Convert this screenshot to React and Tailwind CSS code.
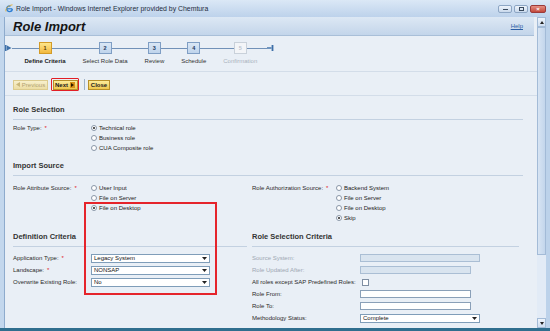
import React from 'react';

const STEPS = [
  { n: 1, label: 'Define Criteria', state: 'active' },
  { n: 2, label: 'Select Role Data', state: 'normal' },
  { n: 3, label: 'Review', state: 'normal' },
  { n: 4, label: 'Schedule', state: 'normal' },
  { n: 5, label: 'Confirmation', state: 'disabled' },
];

const boxStyles = {
  active: 'border-[#d39b27] bg-gradient-to-b from-[#fde68a] to-[#f2b83c] text-[#5b3b00]',
  normal: 'border-[#7f9ec4] bg-gradient-to-b from-[#dae7f5] to-[#bfd4ec] text-[#1e3a5e]',
  disabled: 'border-[#c9d1da] bg-[#f3f5f8] text-[#bcc4ce]',
};

const labelStyles = {
  active: 'font-bold text-[#222]',
  normal: 'text-[#333]',
  disabled: 'text-[#a9b2bd]',
};

function Step({ n, label, state }) {
  return (
    <div className="flex flex-col items-stretch">
      <div className="flex h-[12px] items-center">
        <div className="h-px flex-1 bg-[#7191b8]" />
        <div className={`flex h-[12px] w-[13px] items-center justify-center border text-[5.5px] font-bold ${boxStyles[state]}`}>
          {n}
        </div>
        <div className="h-px flex-1 bg-[#7191b8]" />
      </div>
      <span className={`mt-[3px] px-[8.5px] text-center text-[6px] leading-[8px] whitespace-nowrap ${labelStyles[state]}`}>
        {label}
      </span>
    </div>
  );
}

function Radio({ label, checked }) {
  return (
    <div className="flex h-[10px] items-center gap-[2px]">
      <span className="flex h-[6px] w-[6px] items-center justify-center rounded-full border border-[#8a97a8] bg-white">
        {checked && <span className="h-[2px] w-[2px] rounded-full bg-[#222]" />}
      </span>
      <span className="text-[6px] leading-[8px] text-[#222]">{label}</span>
    </div>
  );
}

function Label({ text, required, muted, width }) {
  return (
    <span className={`shrink-0 text-[6px] leading-[10px] ${muted ? 'text-[#9ea8b4]' : 'text-[#2a2a2a]'} ${width}`}>
      {text}
      {required && <span className="ml-[3px] text-[#e0201c]">*</span>}
    </span>
  );
}

function Select({ value, width }) {
  return (
    <div className={`flex h-[9px] items-center justify-between border border-[#7f9db9] bg-white px-[2px] ${width}`}>
      <span className="text-[6px] leading-[7px] text-[#111]">{value}</span>
      <svg width="5" height="3" viewBox="0 0 5 3">
        <path d="M0 0h5L2.5 3z" fill="#222" />
      </svg>
    </div>
  );
}

function Heading({ children, className = '' }) {
  return (
    <div className={`border-b border-[#c3d1e1] pb-[5px] text-[7.5px] font-bold leading-[9px] text-[#333] ${className}`}>
      {children}
    </div>
  );
}

function FieldRow({ children }) {
  return <div className="flex h-[12px] items-center">{children}</div>;
}

export default function App() {
  return (
    <div className="relative flex h-[331px] w-[550px] flex-col overflow-hidden bg-[#bcd2ea] font-['Liberation_Sans',Arial,sans-serif]">
      {/* Title bar */}
      <div className="flex h-[17px] items-center bg-gradient-to-b from-[#dbe8f6] to-[#bdd2eb] pl-[5px] pr-[4px]">
        <svg width="9" height="9" viewBox="0 0 9 9">
          <circle cx="4.5" cy="4.8" r="2.8" fill="none" stroke="#2d7fd4" strokeWidth="1.4" strokeDasharray="14 4" />
          <path d="M2 4.8h5" stroke="#2d7fd4" strokeWidth="1.2" />
          <path d="M1 7.5C0 5 3 1.5 7.5 0.8" fill="none" stroke="#e8b030" strokeWidth="0.9" />
        </svg>
        <span className="ml-[2px] text-[6.9px] leading-[9px] text-[#1f2d3d]">
          Role Import - Windows Internet Explorer provided by Chemtura
        </span>
        <div className="ml-auto flex items-center gap-[2px]">
          <div className="flex h-[8px] w-[14px] items-center justify-center rounded-[2px] border border-[#8da6c4] bg-gradient-to-b from-[#eef4fb] to-[#c9d9ec]">
            <div className="mt-[2px] h-[1px] w-[5px] bg-[#3a4a5e]" />
          </div>
          <div className="flex h-[8px] w-[14px] items-center justify-center rounded-[2px] border border-[#8da6c4] bg-gradient-to-b from-[#eef4fb] to-[#c9d9ec]">
            <div className="h-[4px] w-[5px] border border-[#3a4a5e]" />
          </div>
          <div className="flex h-[8px] w-[16px] items-center justify-center rounded-[2px] border border-[#9a3a3a] bg-gradient-to-b from-[#e58f84] to-[#c2463a]">
            <span className="text-[6px] font-bold leading-[6px] text-white">×</span>
          </div>
        </div>
      </div>

      {/* Window body */}
      <div className="flex flex-1">
        <div className="w-[5px] border-r border-[#8eabcd] bg-[#c3d7ed]" />

        <div className="flex w-[532px] flex-col bg-[#e9eff6]">
          {/* Page header */}
          <div className="mr-[3px] flex h-[19px] shrink-0 items-center justify-between border-b border-[#a9bfd8] bg-gradient-to-b from-[#dde8f4] to-[#c3d5ea] pl-[8px] pr-[11px]">
            <span className="text-[13px] font-bold italic leading-[15px] text-[#151515]">Role Import</span>
            <span className="text-[6px] leading-[8px] text-[#2b5fa6] underline">Help</span>
          </div>

          {/* Roadmap */}
          <div className="flex h-[36px] shrink-0 items-start border-b border-[#d3dde9] pt-[6px]">
            <div className="flex h-[12px] items-center">
              <svg width="7" height="8" viewBox="0 0 7 8">
                <rect x="0" y="1" width="1.6" height="6" fill="#3d6fa8" />
                <path d="M2 1.5L6.5 4 2 6.5z" fill="#3d6fa8" />
              </svg>
              <div className="h-px w-[4px] bg-[#7191b8]" />
            </div>
            {STEPS.map((s) => (
              <Step key={s.n} {...s} />
            ))}
            <div className="flex h-[12px] items-center">
              <div className="h-px w-[1px] bg-[#7191b8]" />
              <svg width="7" height="8" viewBox="0 0 7 8">
                <path d="M0 3.3h4.5v1.4H0z" fill="#3d6fa8" />
                <rect x="4.6" y="1" width="1.8" height="6" fill="#3d6fa8" />
              </svg>
            </div>
          </div>

          {/* Toolbar */}
          <div className="flex h-[24px] shrink-0 items-center border-b border-[#d3dde9] pl-[8px] pt-[2px]">
            <div className="flex h-[10px] w-[35px] items-center justify-center gap-[2px] border border-[#dccb8e] bg-gradient-to-b from-[#f8f0cd] to-[#ecdda4]">
              <svg width="4" height="5" viewBox="0 0 4 5">
                <path d="M4 0L0 2.5 4 5z" fill="#c9b77a" />
              </svg>
              <span className="text-[6px] leading-[8px] text-[#b3a472]">Previous</span>
            </div>
            <div className="ml-[3px] rounded-[1px] border-[1.5px] border-[#e21f26] p-[0.5px]">
              <div className="flex h-[10px] w-[25px] items-center justify-center gap-[2px] border border-[#b8902a] bg-gradient-to-b from-[#fcec9a] to-[#efc74c]">
                <span className="text-[6px] font-bold leading-[8px] text-[#222]">Next</span>
                <span className="flex h-[6px] w-[5px] items-center justify-center bg-[#d8921a]">
                  <svg width="3" height="4" viewBox="0 0 3 4">
                    <path d="M0 0L3 2 0 4z" fill="#2a1a00" />
                  </svg>
                </span>
              </div>
            </div>
            <div className="ml-[5px] h-[11px] w-px bg-[#9fb3c9]" />
            <div className="ml-[3px] flex h-[10px] w-[22px] items-center justify-center border border-[#b8902a] bg-gradient-to-b from-[#fcec9a] to-[#efc74c]">
              <span className="text-[6px] font-bold leading-[8px] text-[#222]">Close</span>
            </div>
          </div>

          {/* Form */}
          <div className="flex flex-col pl-[8px] pr-[14px]">
            <Heading className="pt-[9px]">Role Selection</Heading>
            <div className="mt-[3px] flex">
              <Label text="Role Type:" required width="w-[78px]" />
              <div className="flex flex-col">
                <Radio label="Technical role" checked />
                <Radio label="Business role" />
                <Radio label="CUA Composite role" />
              </div>
            </div>

            <Heading className="pt-[8px]">Import Source</Heading>
            <div className="mt-[7px] grid grid-cols-[234px_1fr] gap-x-[5px]">
              <div className="flex">
                <Label text="Role Attribute Source:" required width="w-[78px]" />
                <div className="flex flex-col">
                  <Radio label="User Input" />
                  <Radio label="File on Server" />
                  <Radio label="File on Desktop" checked />
                </div>
              </div>
              <div className="flex">
                <Label text="Role Authorization Source:" required width="w-[84px]" />
                <div className="flex flex-col">
                  <Radio label="Backend System" />
                  <Radio label="File on Server" />
                  <Radio label="File on Desktop" />
                  <Radio label="Skip" checked />
                </div>
              </div>
            </div>

            <div className="grid grid-cols-[234px_267px] gap-x-[5px]">
              <div className="flex flex-col">
                <Heading className="pt-[9px]">Definition Criteria</Heading>
                <div className="mt-[5px] flex flex-col">
                  <FieldRow>
                    <Label text="Application Type:" required width="w-[78px]" />
                    <Select value="Legacy System" width="w-[119px]" />
                  </FieldRow>
                  <FieldRow>
                    <Label text="Landscape:" required width="w-[78px]" />
                    <Select value="NONSAP" width="w-[119px]" />
                  </FieldRow>
                  <FieldRow>
                    <Label text="Overwrite Existing Role:" width="w-[78px]" />
                    <Select value="No" width="w-[119px]" />
                  </FieldRow>
                </div>
              </div>
              <div className="flex flex-col">
                <Heading className="pt-[9px]">Role Selection Criteria</Heading>
                <div className="mt-[5px] flex flex-col">
                  <FieldRow>
                    <Label text="Source System:" muted width="w-[108px]" />
                    <div className="h-[8px] w-[120px] border border-[#aabed4] bg-[#d9e4ef]" />
                  </FieldRow>
                  <FieldRow>
                    <Label text="Role Updated After:" muted width="w-[108px]" />
                    <div className="h-[8px] w-[111px] border border-[#aabed4] bg-[#d9e4ef]" />
                  </FieldRow>
                  <FieldRow>
                    <Label text="All roles except SAP Predefined Roles:" width="w-[108px]" />
                    <div className="ml-[2px] h-[7px] w-[7px] border border-[#7f8fa3] bg-white" />
                  </FieldRow>
                  <FieldRow>
                    <Label text="Role From:" width="w-[108px]" />
                    <div className="h-[8px] w-[111px] border border-[#8aa0b8] bg-white" />
                  </FieldRow>
                  <FieldRow>
                    <Label text="Role To:" width="w-[108px]" />
                    <div className="h-[8px] w-[111px] border border-[#8aa0b8] bg-white" />
                  </FieldRow>
                  <FieldRow>
                    <Label text="Methodology Status:" width="w-[108px]" />
                    <Select value="Complete" width="w-[120px]" />
                  </FieldRow>
                </div>
              </div>
            </div>
          </div>
        </div>

        {/* Scrollbar */}
        <div className="flex w-[9px] flex-col bg-[#e2ebf6]">
          <div className="flex h-[10px] items-center justify-center border border-[#a3bbd7] bg-gradient-to-b from-[#eef4fb] to-[#cfdef0]">
            <svg width="4" height="3" viewBox="0 0 4 3">
              <path d="M0 3L2 0 4 3z" fill="#222" />
            </svg>
          </div>
          <div className="h-[228px] border border-[#a3bbd7] bg-gradient-to-r from-[#d7e4f3] to-[#c3d6ec]" />
          <div className="flex-1" />
          <div className="flex h-[10px] items-center justify-center border border-[#a3bbd7] bg-gradient-to-b from-[#eef4fb] to-[#cfdef0]">
            <svg width="4" height="3" viewBox="0 0 4 3">
              <path d="M0 0L4 0 2 3z" fill="#222" />
            </svg>
          </div>
        </div>
        <div className="w-[4px] bg-[#bcd2ea]" />
      </div>

      <div className="h-[3px] bg-[#2f6e8e]" />

      {/* Red annotation box */}
      <div className="pointer-events-none absolute left-[84px] top-[202px] h-[93px] w-[133px] border-2 border-[#e5242b]" />
    </div>
  );
}
